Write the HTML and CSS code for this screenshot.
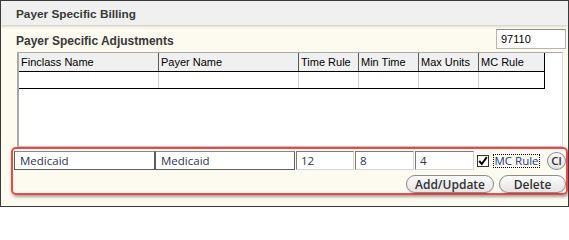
FILE: index.html
```html
<!DOCTYPE html>
<html>
<head>
<meta charset="utf-8">
<link rel="stylesheet" href="styles.css">
</head>
<body>
<div class="frame">
  <div class="titlebar">Payer Specific Billing</div>
  <div class="section-head">
    <div class="section-title">Payer Specific Adjustments</div>
    <input class="code-input" type="text" value="97110">
  </div>
  <div class="listbox">
    <div class="grid-row head">
      <div class="cell c1">Finclass Name</div>
      <div class="cell c2">Payer Name</div>
      <div class="cell c3">Time Rule</div>
      <div class="cell c4">Min Time</div>
      <div class="cell c5">Max Units</div>
      <div class="cell c6">MC Rule</div>
    </div>
    <div class="grid-row body">
      <div class="cell c1"></div>
      <div class="cell c2"></div>
      <div class="cell c3"></div>
      <div class="cell c4"></div>
      <div class="cell c5"></div>
      <div class="cell c6"></div>
    </div>
  </div>
  <div class="editor">
    <div class="edit-row">
      <input class="field wide w1" type="text" value="Medicaid">
      <input class="field wide w2" type="text" value="Medicaid">
      <input class="field small s1" type="text" value="12">
      <input class="field small s2" type="text" value="8">
      <input class="field small s3" type="text" value="4">
      <span class="check"><svg width="10" height="10" viewBox="0 0 10 10"><polyline points="1.2,5 3.8,8 8.8,1.2" fill="none" stroke="#000" stroke-width="2"/></svg></span>
      <span class="check-label">MC Rule</span>
      <span class="round-btn">Cl</span>
    </div>
    <div class="btn-row">
      <button class="pill add">Add/Update</button>
      <button class="pill del">Delete</button>
    </div>
  </div>
</div>
</body>
</html>
```

FILE: styles.css
```css
html, body {
  margin: 0;
  padding: 0;
  background: #ffffff;
}

.frame {
  width: 569px;
  height: 207px;
  box-sizing: border-box;
  border: 1px solid #3a3a3a;
  background: #fdfaef;
  display: flex;
  flex-direction: column;
  overflow: hidden;
}

.titlebar {
  height: 24px;
  flex: none;
  background: #f0f0f0;
  box-shadow: 0 1px 3px rgba(0, 0, 0, 0.22);
  padding-left: 15px;
  font-family: "Liberation Sans", Arial, sans-serif;
  font-weight: bold;
  font-size: 11.8px;
  line-height: 26px;
  color: #383838;
  position: relative;
}

.section-head {
  margin-top: 4px;
  height: 20px;
  flex: none;
  display: flex;
  justify-content: space-between;
  align-items: flex-end;
  padding: 0 2px 0 15px;
}

.section-title {
  font-family: "Liberation Sans", Arial, sans-serif;
  font-weight: bold;
  font-size: 12px;
  line-height: 14px;
  color: #383838;
  padding-bottom: 1px;
}

.code-input {
  width: 70px;
  height: 20px;
  box-sizing: border-box;
  margin: 0;
  border: 1px solid #b4b4b4;
  border-top-color: #8c8c8c;
  background: #fff;
  padding: 0 0 0 4px;
  font-family: "Liberation Sans", Arial, sans-serif;
  font-size: 11px;
  color: #000;
  outline: none;
}

.listbox {
  margin: 3px 0 0 16px;
  width: 546px;
  height: 95px;
  flex: none;
  box-sizing: border-box;
  background: #fff;
  border-left: 2px solid #a9a9a9;
  border-top: 1px solid #a9a9a9;
  border-right: 1px solid #dcdcdc;
  border-bottom: 1px solid #c4c4c4;
}

.grid-row {
  display: flex;
  width: 526px;
}

.grid-row.head {
  height: 19px;
  background: #f0f0f0;
  border-bottom: 1px solid #000;
  box-sizing: border-box;
}

.grid-row.body {
  height: 17px;
  background: #fff;
  border-bottom: 1px solid #000;
  box-sizing: border-box;
}

.cell {
  box-sizing: border-box;
  height: 100%;
  padding-left: 2px;
  font-family: "Liberation Sans", Arial, sans-serif;
  font-size: 11px;
  line-height: 18px;
  color: #000;
  white-space: nowrap;
  overflow: hidden;
}

.head .cell { border-right: 1px solid #5a5a5a; }
.body .cell { border-right: 1px solid #d0d0d0; }
.grid-row .c6 { border-right: 1px solid #000; }

.c1 { width: 140px; }
.c2 { width: 140px; }
.c3 { width: 60px; }
.c4 { width: 60px; }
.c5 { width: 60px; }
.c6 { width: 66px; }

.editor {
  margin: 0 0 0 10px;
  width: 557px;
  height: 48px;
  flex: none;
  box-sizing: border-box;
  border: 2px solid #ef4646;
  border-radius: 5px;
  box-shadow: 1px 2px 3px rgba(0, 0, 0, 0.35);
  padding: 2px 0 0 1px;
  display: flex;
  flex-direction: column;
}

.edit-row {
  display: flex;
  align-items: center;
  height: 19px;
}

.field {
  height: 19px;
  box-sizing: border-box;
  margin: 0;
  background: #fff;
  font-family: "Open Sans", "Noto Sans", sans-serif;
  font-size: 11.5px;
  color: #2b3550;
  outline: none;
}

.wide {
  border: 1px solid #5e5e5e;
  border-top-color: #8a8a8a;
  padding: 0 0 0 5px;
}

.w1 { width: 141px; }
.w2 { width: 140px; }

.small {
  border: 1px solid #d6d6d6;
  border-top-color: #7a7a7a;
  border-left-color: #7a7a7a;
  padding: 0 0 0 4px;
}

.s1 { width: 58px; margin-left: 1px; }
.s2 { width: 59px; margin-left: 1px; }
.s3 { width: 59px; margin-left: 1px; }

.check {
  width: 12px;
  height: 12px;
  box-sizing: border-box;
  margin-left: 3px;
  border: 1px solid #333;
  background: #fff;
  display: flex;
  align-items: center;
  justify-content: center;
}

.check-label {
  margin-left: 4px;
  width: 47px;
  height: 14px;
  box-sizing: border-box;
  border: 1px dotted #000;
  font-family: "Open Sans", "Noto Sans", sans-serif;
  font-size: 11.5px;
  line-height: 12px;
  color: #23398a;
  text-align: center;
  white-space: nowrap;
}

.round-btn {
  margin-left: 7px;
  width: 19px;
  height: 18px;
  box-sizing: border-box;
  border: 1px solid #8a8a8a;
  border-radius: 50%;
  background: linear-gradient(#fbfbfb, #e2e2e2);
  font-family: "Open Sans", "Noto Sans", sans-serif;
  font-weight: 600;
  font-size: 11.5px;
  line-height: 15px;
  color: #333;
  text-align: center;
  overflow: hidden;
}

.btn-row {
  margin-top: 5px;
  display: flex;
  justify-content: flex-end;
  gap: 5px;
  padding-right: 0;
}

.pill {
  height: 18px;
  box-sizing: border-box;
  margin: 0;
  padding: 0;
  border: 1px solid #8c8c8c;
  border-radius: 9px;
  background: linear-gradient(#fcfcfc, #e4e4e4);
  box-shadow: 0 1px 1px rgba(0, 0, 0, 0.15);
  font-family: "Open Sans", "Noto Sans", sans-serif;
  font-weight: 600;
  font-size: 12px;
  line-height: 15px;
  color: #333;
}

.add { width: 88px; }
.del { width: 67px; }
```
